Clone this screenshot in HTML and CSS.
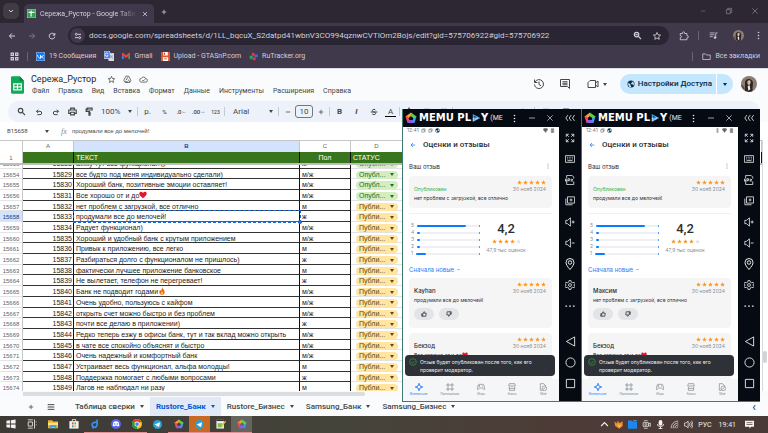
FILE: index.html
```html
<!DOCTYPE html>
<html lang="ru">
<head>
<meta charset="utf-8">
<title>Сережа_Рустор - Google Таблицы</title>
<link rel="stylesheet" href="styles.css">
</head>
<body>
<svg class="defs" aria-hidden="true">
  <symbol id="star" viewBox="0 0 24 24"><path fill="currentColor" d="M12 1l3.3 7.2 7.7.9-5.700 5.300 1.500 7.600L12 18.200 5.200 22l1.500-7.600L1 9.100l7.700-.9z"/></symbol>
  <symbol id="star-o" viewBox="0 0 24 24"><path d="M12 3.500l2.500 5.800 6.200.5-4.700 4.100 1.400 6.100L12 16.800 6.600 20l1.400-6.100L3.300 9.800l6.200-.5z"/></symbol>
  <symbol id="down" viewBox="0 0 24 24"><path d="M6 9l6 6 6-6"/></symbol>
  <symbol id="left" viewBox="0 0 24 24"><path d="M21 12H4m8-8l-8 8 8 8"/></symbol>
  <symbol id="right" viewBox="0 0 24 24"><path d="M3 12h17m-8-8l8 8-8 8"/></symbol>
  <symbol id="reload" viewBox="0 0 24 24"><path d="M20 9a8.500 8.500 0 1 0 .5 5M20.500 3v6.500H14"/></symbol>
  <symbol id="close" viewBox="0 0 24 24"><path d="M4 4l16 16M20 4L4 20"/></symbol>
  <symbol id="plus" viewBox="0 0 24 24"><path d="M12 3v18M3 12h18"/></symbol>
  <symbol id="minus" viewBox="0 0 24 24"><path d="M3 12h18"/></symbol>
  <symbol id="restore" viewBox="0 0 24 24"><path d="M4 8h12v12H4zM8 8V4h12v12h-4"/></symbol>
  <symbol id="kebab" viewBox="0 0 24 24"><g fill="currentColor" stroke="none"><circle cx="12" cy="4" r="2.200"/><circle cx="12" cy="12" r="2.200"/><circle cx="12" cy="20" r="2.200"/></g></symbol>
  <symbol id="tune" viewBox="0 0 24 24"><circle cx="7" cy="7" r="3"/><path d="M12 7h9M3 17h9"/><circle cx="17" cy="17" r="3"/></symbol>
  <symbol id="search" viewBox="0 0 24 24"><circle cx="9.500" cy="9.500" r="6"/><path d="M14 14l7.500 7.500"/></symbol>
  <symbol id="zoomout" viewBox="0 0 24 24"><circle cx="9.500" cy="9.500" r="6"/><path d="M14 14l7.500 7.500M6.500 9.500h6"/></symbol>
  <symbol id="puzzle" viewBox="0 0 24 24"><path d="M3 6h5.500V4.500a2.500 2.500 0 0 1 5 0V6H19v5.500h1a2.500 2.500 0 0 1 0 5h-1V21H3v-5c4 0 4-5 0-5z"/></symbol>
  <symbol id="playlist" viewBox="0 0 24 24"><path d="M2 5h13M2 10h13M2 15h8M18 17V5h5"/><circle cx="16" cy="17.500" r="2.500" fill="currentColor"/></symbol>
  <symbol id="apps" viewBox="0 0 24 24"><path d="M3 3h6v6H3zM15 3h6v6h-6zM3 15h6v6H3zM15 15h6v6h-6z"/></symbol>
  <symbol id="folder" viewBox="0 0 24 24"><path d="M2 5h7l2.500 3H22v12H2z"/></symbol>
  <symbol id="avatar" viewBox="0 0 24 24"><circle cx="12" cy="12" r="12" fill="#8b7d74"/><path fill="#2b2523" d="M6 22V9c1-6 11-6 12 1l-1 13-5 1z"/><path fill="#d9b8a5" d="M9.500 8.500c1-3 5-3 5 0s-1.500 5-2.800 5-2.200-2-2.200-5z"/><path fill="#f0ebe8" d="M10 15l3-1 1 6-3 2z"/><path fill="#5c504a" d="M0 13c3 0 5 3 6 8-3-1-6-4-6-8z"/></symbol>
  <symbol id="sheets" viewBox="0 0 24 32"><path fill="#0fa958" d="M2 0h14l8 8v22a2 2 0 0 1-2 2H2a2 2 0 0 1-2-2V2a2 2 0 0 1 2-2z"/><path fill="#087f3f" d="M16 0l8 8h-8z"/><path fill="none" stroke="#fff" stroke-width="2.200" d="M5 14h14v11H5zM5 19.500h14M12 14v11"/></symbol>
  <symbol id="person-add" viewBox="0 0 24 24"><path d="M8 3h7l6 11-3 6H6l-4-6zM8 14l5-8M14 12l4 7M5 18h8"/></symbol>
  <symbol id="cloud" viewBox="0 0 24 24"><path d="M7 19a5 5 0 0 1-.5-10 6 6 0 0 1 11.300 1A4.500 4.500 0 0 1 18 19zM9 13.500l2.500 2.500 4-4.500"/></symbol>
  <symbol id="history" viewBox="0 0 24 24"><path d="M4 8a9 9 0 1 1-1 5M3 3v6h6M12 7v6l4 2.500"/></symbol>
  <symbol id="comment" viewBox="0 0 24 24"><path d="M3 3h18v18l-4-4H3zM7 7.500h10M7 10.500h10M7 13.500h10"/></symbol>
  <symbol id="video" viewBox="0 0 24 24"><path d="M6 5h11v14H2V9zM17 10l5-4v12l-5-4"/></symbol>
  <symbol id="globe" viewBox="0 0 24 24"><circle cx="12" cy="12" r="10.500" fill="#0b2a44"/><path fill="#c2e7ff" d="M4 8l6 5v3l2 2v4C6 21 2 15 4 8zM12 3h4l1 3-3 2v2h-3l2 3h4l1 3 2 0c2-6 0-10-4-12z"/></symbol>
  <symbol id="undo" viewBox="0 0 24 24"><path d="M5 10h10a5 5 0 0 1 0 10H7M9.500 5L4.500 10l5 5"/></symbol>
  <symbol id="redo" viewBox="0 0 24 24"><path d="M19 10H9a5 5 0 0 0 0 10h8M14.500 5l5 5-5 5"/></symbol>
  <symbol id="print" viewBox="0 0 24 24"><path d="M7 8V3h10v5M6 17H2V8h20v9h-4M7 14h10v7H7z"/></symbol>
  <symbol id="paint" viewBox="0 0 24 24"><path d="M6 3h13v5H6zM6 5.500H3V12h9v3M10.500 15h3v7h-3z"/></symbol>
  <symbol id="strike" viewBox="0 0 24 24"><path d="M2 12h20M17 7c-1-4-10-4-10 1 0 2 2 3.500 5 4s5 2 5 4c0 5-9 5-10.500 1"/></symbol>
  <symbol id="fill" viewBox="0 0 24 24"><path d="M9 2l10 10-7 7-8-8 7-7M20 15l2 4"/></symbol>
  <symbol id="box" viewBox="0 0 24 24"><path d="M3 4h18v16H3zM12 4v16M3 12h18"/></symbol>
  <symbol id="lines" viewBox="0 0 24 24"><path d="M2 5h20M2 12h20M2 19h20"/></symbol>
  <symbol id="memu" viewBox="0 0 24 24"><path fill="#ff9d2e" d="M12 1L1 9l5 4 6-5z"/><path fill="#f04b58" d="M1 9l4 13 4-5-3-8z"/><path fill="#8b5cf0" d="M5 22h14l-3-6H8z"/><path fill="#3a9df5" d="M19 22l4-13-6 1-2 8z"/><path fill="#5ad04a" d="M12 1l11 8-5 4-7-5z"/></symbol>
  <symbol id="play" viewBox="0 0 24 24"><path fill="#111c26" stroke="#35a7ef" stroke-width="3.500" d="M4 3l17 9-17 9z"/><path fill="#2a7fd0" d="M4 12h14L4 20z"/></symbol>
  <symbol id="chev3" viewBox="0 0 24 24"><path d="M7 5l-5 7 5 7M15 5l-5 7 5 7M23 5l-5 7 5 7"/></symbol>
  <symbol id="full" viewBox="0 0 24 24"><path d="M3 9V3h6M3 3l6 6M15 3h6v6M21 3l-6 6M3 15v6h6M3 21l6-6M21 15v6h-6M21 21l-6-6"/></symbol>
  <symbol id="keyb" viewBox="0 0 24 24"><path d="M1 4h22v16H1zM5 8h2M9 8h2M13 8h2M17 8h2M5 12h2M9 12h2M13 12h2M17 12h2M6 16h12"/></symbol>
  <symbol id="apk" viewBox="0 0 24 24"><path d="M4 8V1h13l4 4v3M4 16v7h17v-7M0 16l2-7 2 7M1 14h3M7 16V9h4v4H7M15 9v7M20 9l-4 3.500 4 3.500"/></symbol>
  <symbol id="copy" viewBox="0 0 24 24"><path d="M6 2h17v15H6zM2 6v15h16M14.500 6v7M11 9.500h7"/></symbol>
  <symbol id="volup" viewBox="0 0 24 24"><path d="M2 8h4l7-6v20l-7-6H2zM16 12h7M19.500 8.500v7"/></symbol>
  <symbol id="voldn" viewBox="0 0 24 24"><path d="M2 8h4l7-6v20l-7-6H2zM16 12h7"/></symbol>
  <symbol id="pin" viewBox="0 0 24 24"><path d="M12 23C7 17 4 13 4 9a8 8 0 0 1 16 0c0 4-3 8-8 14z"/><circle cx="12" cy="9" r="3.500"/></symbol>
  <symbol id="gear" viewBox="0 0 24 24"><path d="M10 1h4l1 4 3 1.500 4-1 2 3.500-3 3 3 3-2 3.500-4-1-3 1.500-1 4h-4l-1-4-3-1.500-4 1L0 15l3-3-3-3 2-3.500 4 1L9 5z"/><circle cx="12" cy="12" r="3.500"/></symbol>
  <symbol id="dots" viewBox="0 0 24 24"><path d="M1 12h4M10 12h4M19 12h4"/></symbol>
  <symbol id="tri" viewBox="0 0 24 24"><path d="M21 2v20L3 12z"/></symbol>
  <symbol id="circle" viewBox="0 0 24 24"><circle cx="12" cy="12" r="10"/></symbol>
  <symbol id="square" viewBox="0 0 24 24"><path d="M3 3h18v18H3z"/></symbol>
  <symbol id="thumb" viewBox="0 0 24 24"><path d="M3 11h4v10H3zM7 12l5-9c3 0 3 2 2 6h7l-2 12H7"/></symbol>
  <symbol id="check" viewBox="0 0 24 24"><circle cx="12" cy="12" r="10"/><path d="M7 12l4 4 6-7"/></symbol>
  <symbol id="spark" viewBox="0 0 24 24"><path d="M12 1c1 7 4 10 11 11-7 1-10 4-11 11-1-7-4-10-11-11 7-1 10-4 11-11z"/></symbol>
  <symbol id="pad" viewBox="0 0 24 24"><path d="M6 4h12c4 0 5 16 4 16-3 0-4-5-6-5H8c-2 0-3 5-6 5-1 0 0-16 4-16zM7 7v4M5 9h4M15 9h3"/></symbol>
  <symbol id="shop" viewBox="0 0 24 24"><path d="M4 2h16l2 7H2zM4 12v10h16V12M4 16h16"/></symbol>
  <symbol id="mine" viewBox="0 0 24 24"><path d="M20 9L14 2H4v20h6"/><circle cx="16" cy="16" r="7"/><path d="M12 19l8-6"/></symbol>
  <symbol id="heart" viewBox="0 0 24 24"><path fill="#e0182d" d="M12 22C4 16 0 11 1 7c1-6 8-6 11-1 3-5 10-5 11 1 1 4-3 9-11 15z"/></symbol>
  <symbol id="fire" viewBox="0 0 24 24"><path fill="#ec6a1f" d="M12 0c1 5 8 8 8 15 0 5-3 9-8 9s-8-4-8-9c0-3 1-6 3-7l1 4c3-3 4-7 4-12z"/><path fill="#ffd24a" d="M12 13c3 3 4 5 3 8-2 3-6 2-7-1 0-3 3-3 4-7z"/></symbol>
  <symbol id="telegram" viewBox="0 0 24 24"><circle cx="12" cy="12" r="12" fill="#2a9fd8"/><path fill="#fff" d="M4 12l15-6-3 13-4-3-2 2-1-4z"/></symbol>
</svg>

<div class="browser">
  <header class="tabstrip">
    <button class="tabsearch" aria-label="Поиск вкладок"><svg class="ic8 bold"><use href="#down"/></svg></button>
    <div class="tab">
      <svg class="ic9" viewBox="0 0 24 24"><path fill="#2ba24c" d="M0 0h24v24H0z"/><path fill="none" stroke="#fff" stroke-width="3" d="M4 9h16M11 4v16"/></svg>
      <span class="tab-title">Сережа_Рустор - Google Табл</span>
      <button aria-label="Закрыть вкладку"><svg class="ic6 bold"><use href="#close"/></svg></button>
    </div>
    <button class="newtab" aria-label="Новая вкладка"><svg class="ic6 bold"><use href="#plus"/></svg></button>
    <div class="wincontrols">
      <button aria-label="Свернуть"><svg class="ic6"><use href="#minus"/></svg></button>
      <button aria-label="Восстановить"><svg class="ic8"><use href="#restore"/></svg></button>
      <button aria-label="Закрыть"><svg class="ic8"><use href="#close"/></svg></button>
    </div>
  </header>
  <nav class="addressrow">
    <button aria-label="Назад"><svg class="ic8 bold"><use href="#left"/></svg></button>
    <button class="dim" aria-label="Вперёд"><svg class="ic8 bold"><use href="#right"/></svg></button>
    <button aria-label="Обновить"><svg class="ic8 bold"><use href="#reload"/></svg></button>
    <div class="omnibox">
      <button class="siteinfo" aria-label="Сведения о сайте"><svg class="ic8 bold"><use href="#tune"/></svg></button>
      <input aria-label="Адрес" value="docs.google.com/spreadsheets/d/1LL_bqcuX_S2datpd41wbnV3CO994qznwCVTIOm2Bojs/edit?gid=575706922#gid=575706922">
      <button aria-label="Масштаб"><svg class="ic9 bold"><use href="#zoomout"/></svg></button>
      <button aria-label="В закладки"><svg class="ic10"><use href="#star-o"/></svg></button>
    </div>
    <button class="ext" aria-label="Расширения"><svg class="ic10"><use href="#puzzle"/></svg></button>
    <i class="vsep"></i>
    <button class="ext" aria-label="Музыка"><svg class="ic9"><use href="#playlist"/></svg></button>
    <button aria-label="Профиль"><svg class="ic11"><use href="#avatar"/></svg></button>
    <button aria-label="Меню"><svg class="ic9"><use href="#kebab"/></svg></button>
  </nav>
  <nav class="bookmarks">
    <button aria-label="Приложения"><svg class="ic9 bold"><use href="#apps"/></svg></button>
    <i class="vsep"></i>
    <a href="#vk"><svg class="ic9" viewBox="0 0 24 24"><rect width="24" height="24" rx="5" fill="#0a7cff"/><path fill="none" stroke="#fff" stroke-width="2.500" d="M4 8c1 6 4 9 8 9V8M20 8c-2 4-4 5-8 5 4 0 6 1 8 4"/></svg>19 Сообщения</a>
    <a href="#translate" aria-label="Переводчик"><svg class="ic10" viewBox="0 0 24 24"><path fill="#dfe3ea" d="M10 6h14v18H12z"/><path fill="#4a86e8" d="M0 0h13l4 18H0z"/><path fill="none" stroke="#fff" stroke-width="2" d="M10 7a4 4 0 1 0 0 4H7"/><path fill="none" stroke="#6d7f99" stroke-width="1.500" d="M15 12h7M18 12c0 4 2 6 4 7"/></svg></a>
    <a href="#gmail"><svg class="ic8" viewBox="0 0 24 24"><path fill="#4285f4" stroke="none" d="M0 4h5v17H0z"/><path fill="#34a853" stroke="none" d="M19 4h5v17h-5z"/><path fill="#ea4335" stroke="none" d="M0 4l4-1 8 7 8-7 4 1v5l-12 9L0 9z"/></svg>Gmail</a>
    <a href="#upload"><svg class="ic9" viewBox="0 0 24 24"><path fill="#e2572b" stroke="none" d="M0 0h24v24H0z"/><path fill="#fff" stroke="none" d="M6 0h12v9H6zM5 14h14v10H5z"/><path fill="#c23c1d" stroke="none" d="M8 2h3v5H8zM8 17h8v2H8z"/></svg>Upload - GTASnP.com</a>
    <a href="#rutracker"><svg class="ic9" viewBox="0 0 24 24"><g stroke="none"><path fill="#d8394a" d="M8 1l8 2-2 9-7-3z"/><path fill="#3f6fd8" d="M14 8l9-2 0 8-8 0z"/><path fill="#23a559" d="M1 10l9 0 0 8-7 2z"/><path fill="#d8394a" d="M10 14l9 1-3 8-7-3z"/></g></svg>RuTracker.org</a>
    <div class="allbm"><i class="vsep"></i><a href="#all"><svg class="ic9"><use href="#folder"/></svg>Все закладки</a></div>
  </nav>
</div>

<main class="docs">
  <header class="dochead">
    <svg class="logo"><use href="#sheets"/></svg>
    <div class="docinfo">
      <div class="titleline"><h1>Сережа_Рустор</h1><svg class="ic9"><use href="#star-o"/></svg><svg class="ic9"><use href="#person-add"/></svg><svg class="ic9"><use href="#cloud"/></svg></div>
      <nav class="menu"><a href="#f">Файл</a><a href="#e">Правка</a><a href="#v">Вид</a><a href="#i">Вставка</a><a href="#fm">Формат</a><a href="#d">Данные</a><a href="#t">Инструменты</a><a href="#x">Расширения</a><a href="#h">Справка</a></nav>
    </div>
    <div class="docactions">
      <button aria-label="История"><svg class="ic12"><use href="#history"/></svg></button>
      <button aria-label="Комментарии"><svg class="ic12"><use href="#comment"/></svg></button>
      <button class="meet" aria-label="Видеовстреча"><svg class="ic12"><use href="#video"/></svg><i class="caret"></i></button>
      <div class="share"><button class="share-main"><svg class="ic8"><use href="#globe"/></svg>Настройки Доступа</button><button class="share-more" aria-label="Ещё"><i class="caret"></i></button></div>
      <svg class="ic16"><use href="#avatar"/></svg>
    </div>
  </header>

  <div class="toolbar">
    <button aria-label="Поиск"><svg class="ic9 bold"><use href="#search"/></svg></button>
    <button aria-label="Отменить"><svg class="ic8 bold"><use href="#undo"/></svg></button>
    <button aria-label="Повторить"><svg class="ic8 bold"><use href="#redo"/></svg></button>
    <button aria-label="Печать"><svg class="ic9 bold"><use href="#print"/></svg></button>
    <button aria-label="Копировать формат"><svg class="ic9 bold"><use href="#paint"/></svg></button>
    <span class="drop zoomsel"><select aria-label="Масштаб"><option>100%</option></select></span>
    <i class="vsep"></i>
    <button>р.</button><button class="small">%</button><button class="small">.0<sub>←</sub></button><button class="small">.00<sub>→</sub></button><button class="small num">123</button>
    <i class="vsep"></i>
    <span class="drop fontsel"><select aria-label="Шрифт"><option>Arial</option></select></span>
    <i class="vsep"></i>
    <div class="sizer"><button aria-label="Уменьшить"><svg class="ic6 bold"><use href="#minus"/></svg></button><input aria-label="Размер" value="10"><button aria-label="Увеличить"><svg class="ic6 bold"><use href="#plus"/></svg></button></div>
    <i class="vsep"></i>
    <button><b>B</b></button><button><b><em>I</em></b></button><button aria-label="Зачёркнутый"><svg class="ic8 bold"><use href="#strike"/></svg></button><button class="fontcolor">A</button>
    <i class="vsep"></i>
    <button aria-label="Заливка"><svg class="ic9 bold"><use href="#fill"/></svg></button>
    <button aria-label="Границы"><svg class="ic8 bold"><use href="#box"/></svg></button>
    <button aria-label="Объединить"><svg class="ic8 bold"><use href="#box"/></svg></button>
    <i class="vsep"></i>
    <button class="wide" aria-label="По горизонтали"><svg class="ic8 bold"><use href="#lines"/></svg></button>
    <button class="wide" aria-label="По вертикали"><svg class="ic8 bold"><use href="#plus"/></svg></button>
    <button class="wide" aria-label="Перенос"><svg class="ic8 bold"><use href="#redo"/></svg></button>
    <button class="wide" aria-label="Поворот"><svg class="ic8 bold"><use href="#fill"/></svg></button>
    <i class="vsep"></i>
    <button class="wide" aria-label="Ссылка"><svg class="ic8 bold"><use href="#box"/></svg></button>
    <button class="wide" aria-label="Комментарий"><svg class="ic8 bold"><use href="#comment"/></svg></button>
  </div>

  <div class="formula">
    <span class="drop namebox"><input aria-label="Ячейка" value="B15658"></span>
    <span class="fx">fx</span>
    <input class="fxinput" aria-label="Формула" value="продумали все до мелочей!">
  </div>

  <div class="sheet">
    <div class="gridwrap">
    <table>
      <thead>
        <tr class="cols"><th></th><th>A</th><th class="sel">B</th><th>C</th><th>D</th><th></th></tr>
        <tr class="frozen"><th scope="row">1</th><td></td><td>ТЕКСТ</td><td class="mid">Пол</td><td>СТАТУС</td><td class="rest"></td></tr>
      </thead>
      <tbody>
        <tr><th scope="row">15653</th><td>15828</td><td>Вижу тут все функционал<svg class="emo"><use href="#fire"/></svg></td><td>м</td><td><span class="chip ok"><select aria-label="Статус"><option>Опубл...</option></select></span></td></tr>
        <tr><th scope="row">15654</th><td>15829</td><td>все будто под меня индивидуально сделали)</td><td>м/ж</td><td><span class="chip ok"><select aria-label="Статус"><option>Опубл...</option></select></span></td></tr>
        <tr><th scope="row">15655</th><td>15830</td><td>Хороший банк, позитивные эмоции оставляет!</td><td>м/ж</td><td><span class="chip ok"><select aria-label="Статус"><option>Опубл...</option></select></span></td></tr>
        <tr><th scope="row">15656</th><td>15831</td><td>Все хорошо от и до<svg class="emo"><use href="#heart"/></svg></td><td>м/ж</td><td><span class="chip ok"><select aria-label="Статус"><option>Опубл...</option></select></span></td></tr>
        <tr><th scope="row">15657</th><td>15832</td><td>нет проблем с загрузкой, все отлично</td><td>м</td><td><span class="chip"><select aria-label="Статус"><option>Публи...</option></select></span></td></tr>
        <tr class="active"><th scope="row">15658</th><td>15833</td><td>продумали все до мелочей!</td><td>ж</td><td><span class="chip"><select aria-label="Статус"><option>Публи...</option></select></span></td></tr>
        <tr><th scope="row">15659</th><td>15834</td><td>Радует функционал)</td><td>м/ж</td><td><span class="chip"><select aria-label="Статус"><option>Публи...</option></select></span></td></tr>
        <tr><th scope="row">15660</th><td>15835</td><td>Хороший и удобный банк с крутым приложением</td><td>м/ж</td><td><span class="chip"><select aria-label="Статус"><option>Публи...</option></select></span></td></tr>
        <tr><th scope="row">15661</th><td>15836</td><td>Привык к приложению, все легко</td><td>м</td><td><span class="chip"><select aria-label="Статус"><option>Публи...</option></select></span></td></tr>
        <tr><th scope="row">15662</th><td>15837</td><td>Разбираться долго с функционалом не пришлось)</td><td>ж</td><td><span class="chip"><select aria-label="Статус"><option>Публи...</option></select></span></td></tr>
        <tr><th scope="row">15663</th><td>15838</td><td>фактически лучшее приложение банковское</td><td>м</td><td><span class="chip"><select aria-label="Статус"><option>Публи...</option></select></span></td></tr>
        <tr><th scope="row">15664</th><td>15839</td><td>Не вылетает, телефон не перегревает!</td><td>ж</td><td><span class="chip"><select aria-label="Статус"><option>Публи...</option></select></span></td></tr>
        <tr><th scope="row">15665</th><td>15840</td><td>Банк не подводит годами<svg class="emo"><use href="#fire"/></svg></td><td>м/ж</td><td><span class="chip"><select aria-label="Статус"><option>Публи...</option></select></span></td></tr>
        <tr><th scope="row">15666</th><td>15841</td><td>Очень удобно, пользуюсь с кайфом</td><td>м/ж</td><td><span class="chip"><select aria-label="Статус"><option>Публи...</option></select></span></td></tr>
        <tr><th scope="row">15667</th><td>15842</td><td>открыть счет можно быстро и без проблем</td><td>м/ж</td><td><span class="chip"><select aria-label="Статус"><option>Публи...</option></select></span></td></tr>
        <tr><th scope="row">15668</th><td>15843</td><td>почти все делаю в приложении)</td><td>ж</td><td><span class="chip"><select aria-label="Статус"><option>Публи...</option></select></span></td></tr>
        <tr><th scope="row">15669</th><td>15844</td><td>Редко теперь езжу в офисы банк, тут и так вклад можно открыть</td><td>м/ж</td><td><span class="chip"><select aria-label="Статус"><option>Публи...</option></select></span></td></tr>
        <tr><th scope="row">15670</th><td>15845</td><td>в чате все спокойно объяснят и быстро</td><td>м/ж</td><td><span class="chip"><select aria-label="Статус"><option>Публи...</option></select></span></td></tr>
        <tr><th scope="row">15671</th><td>15846</td><td>Очень надежный и комфортный банк</td><td>м/ж</td><td><span class="chip"><select aria-label="Статус"><option>Публи...</option></select></span></td></tr>
        <tr><th scope="row">15672</th><td>15847</td><td>Устраивает весь функционал, альфа молодцы!</td><td>м</td><td><span class="chip"><select aria-label="Статус"><option>Публи...</option></select></span></td></tr>
        <tr><th scope="row">15673</th><td>15848</td><td>Поддержка помогает с любыми вопросами</td><td>ж</td><td><span class="chip"><select aria-label="Статус"><option>Публи...</option></select></span></td></tr>
        <tr><th scope="row">15674</th><td>15849</td><td>Лагов не наблюдал ни разу</td><td>м</td><td><span class="chip"><select aria-label="Статус"><option>Публи...</option></select></span></td></tr>
      </tbody>
    </table>
    </div>
    <div class="vscroll"><i></i></div>
    <div class="hscroll"><i></i></div>
  </div>

  <footer class="sheettabs">
    <button class="tool" aria-label="Добавить лист"><svg class="ic6 bold"><use href="#plus"/></svg></button>
    <button class="tool" aria-label="Все листы"><svg class="ic8 bold"><use href="#lines"/></svg></button>
    <button class="st first">Таблица сверки<i class="caret"></i></button>
    <button class="st on">Rustore_Банк<i class="caret"></i></button>
    <button class="st">Rustore_Бизнес<i class="caret"></i></button>
    <button class="st">Samsung_Банк<i class="caret"></i></button>
    <button class="st">Samsung_Бизнес<i class="caret"></i></button>
    <button class="tool collapse" aria-label="Скрыть панель">‹</button>
  </footer>
</main>

<footer class="taskbar">
  <button aria-label="Пуск"><svg class="ic10" viewBox="0 0 24 24"><path fill="#f2f2f2" stroke="none" d="M1 4l9-1v8H1zM12 3l11-2v10H12zM1 13h9v8l-9-1zM12 13h11v10l-11-2z"/></svg></button>
  <button aria-label="Представление задач"><svg class="ic10" viewBox="0 0 24 24"><path d="M2 2h12M2 22h12M3 7h10v10H3zM18 1v22M21 7h2M21 14h2"/></svg></button>
  <button aria-label="Проводник"><svg class="ic10" viewBox="0 0 24 24"><g stroke="none"><path fill="#f0b429" d="M0 3h10l2 3h12v16H0z"/><path fill="#ffe08a" d="M0 9h24v6H0z"/><path fill="#3b9be8" d="M4 15h16v8h-4v-4H8v4H4z"/></g></svg></button>
  <button aria-label="Магазин"><svg class="ic10" viewBox="0 0 24 24"><path fill="#f4f4f4" stroke="none" d="M1 5h22v18H1z"/><path fill="none" stroke="#f4f4f4" stroke-width="2" d="M8 5V1h8v4"/><g stroke="none"><path fill="#e8532b" d="M7 8h4v5H7z"/><path fill="#6bb52f" d="M13 8h4v5h-4z"/><path fill="#2c9ce8" d="M7 15h4v5H7z"/><path fill="#f5b41c" d="M13 15h4v5h-4z"/></g></svg></button>
  <button class="run" aria-label="Редактор"><svg class="ic10" viewBox="0 0 24 24"><path fill="none" stroke="#3d8ff0" stroke-width="4" d="M17 1v13a6 6 0 1 1-5-6h5M7 16v7"/></svg></button>
  <button class="run" aria-label="Discord"><svg class="ic10" viewBox="0 0 24 24"><g stroke="none"><circle cx="12" cy="12" r="12" fill="#5865f2"/><path fill="#fff" d="M6 7c4-2 8-2 12 0l2 9-4 2-1-2H9l-1 2-4-2z"/><circle cx="9" cy="12" r="1.700" fill="#5865f2"/><circle cx="15" cy="12" r="1.700" fill="#5865f2"/></g></svg></button>
  <button class="run" aria-label="Chrome"><svg class="ic10" viewBox="0 0 24 24"><g stroke="none"><circle cx="12" cy="12" r="12" fill="#fbc116"/><path fill="#e33b2e" d="M12 12L1.600 6a12 12 0 0 1 20.800 0z"/><path fill="#229a48" d="M12 12l0 12A12 12 0 0 1 1.600 6z"/><circle cx="12" cy="12" r="6" fill="#fff"/><circle cx="12" cy="12" r="4.500" fill="#4285f4"/></g></svg></button>
  <button aria-label="Telegram"><svg class="ic9"><use href="#telegram"/></svg></button>
  <button class="run" aria-label="MEmu"><svg class="ic10"><use href="#memu"/></svg></button>
  <button class="run alert" aria-label="Telegram"><svg class="ic9"><use href="#telegram"/></svg></button>
  <button class="run" aria-label="Notepad++"><svg class="ic10" viewBox="0 0 24 24"><g stroke="none"><path fill="#f1f1ea" d="M1 2h18v21H1z"/><path fill="#333" d="M1 2h18v3H1z"/><path fill="#7bc043" d="M4 10h11v10H4z"/><path fill="#e8b93c" d="M22 4l2 3-9 10-3 1 1-4z"/></g></svg></button>
  <button class="run open" aria-label="MEmu"><svg class="ic10"><use href="#memu"/></svg></button>
  <div class="tray">
    <svg class="ic9 bold" viewBox="0 0 24 24"><path d="M3 16l9-9 9 9"/></svg>
    <svg class="ic9" viewBox="0 0 24 24"><g stroke="none"><path fill="#f28c28" d="M1 4l8 5V1l6 7 8-5v13l-9 7L3 16z"/><path fill="#ffd08a" d="M9 9l6 6 6-5-7 10z"/></g></svg>
    <svg class="ic9" viewBox="0 0 24 24"><g stroke="none"><path fill="#1a86f0" d="M0 1h10l2 3h12v19H0z"/><path fill="#5db4ff" d="M14 1h9v2h-9z"/></g></svg>
    <svg class="ic9" viewBox="0 0 24 24"><path d="M5 2h10M3 7h14v10H3zM17 11l5-3v9l-5-3M5 22h10"/><circle cx="10" cy="12" r="2.500"/></svg>
    <svg class="ic9" viewBox="0 0 24 24"><rect x="7" y="0" width="10" height="15" rx="5" fill="#f4f4f4" stroke="none"/><path fill="none" stroke="#f4f4f4" stroke-width="2.500" d="M4 11c0 9 16 9 16 0M12 18v5M7 23h10"/></svg>
    <svg class="ic9" viewBox="0 0 24 24"><path d="M3 22C3 11 11 3 22 3M8 22c0-8 6-14 14-14M13 22c0-5 4-9 9-9M18 22c0-2 2-4 4-4"/></svg>
    <svg class="ic9" viewBox="0 0 24 24"><path d="M1 8h4l6-5v18l-6-5H1zM14 8c2 2 2 6 0 8M17 5c4 4 4 10 0 14M20 2c5 6 5 14 0 20"/></svg>
    <span class="lang">РУС</span><time>19:41</time>
    <svg class="ic9" viewBox="0 0 24 24"><path fill="#f4f4f4" stroke="none" d="M0 2h24v16h-8l-4 5v-5H0z"/><path stroke="#55433e" stroke-width="2" d="M4 7h16M4 12h16"/></svg>
  </div>
</footer>

<section class="emu one" aria-label="MEmu 1">
  <header class="emubar"><svg class="ic12"><use href="#memu"/></svg><strong>MEMU PL<svg class="ic8"><use href="#play"/></svg>Y</strong><span class="inst">(ME</span>
    <button aria-label="Меню"><svg class="ic9"><use href="#kebab"/></svg></button><button aria-label="Свернуть"><svg class="ic8"><use href="#minus"/></svg></button><button aria-label="Закрыть"><svg class="ic8"><use href="#close"/></svg></button><button class="fold" aria-label="Боковая панель"><svg class="ic10"><use href="#chev3"/></svg></button></header>
  <div class="screen">
    <div class="status"><time>12:41</time><svg class="ic5 bold"><use href="#restore"/></svg><svg class="ic5 bold"><use href="#restore"/></svg><svg class="ic5 bold"><use href="#globe"/></svg><span class="sys"><svg class="ic5" viewBox="0 0 24 24"><path fill="#666" d="M0 6c7-6 17-6 24 0L12 22z"/></svg><svg class="ic5" viewBox="0 0 24 24"><path fill="#888" d="M6 3h12v20H6z"/></svg></span></div>
    <h2><svg class="ic6 bold"><use href="#left"/></svg>Оценки и отзывы</h2>
    <div class="own"><span>Ваш отзыв</span><svg class="ic6"><use href="#kebab"/></svg></div>
    <article class="card mine">
      <div class="stars"><svg><use href="#star"/></svg><svg><use href="#star"/></svg><svg><use href="#star"/></svg><svg><use href="#star"/></svg><svg><use href="#star"/></svg></div>
      <div class="who"><span class="pub">Опубликован</span><time>30 нояб 2024</time></div>
      <p>нет проблем с загрузкой, все отлично</p>
    </article>
    <div class="rating">
      <ol><li>5<span class="bar"><i style="width:79%"></i></span></li><li>4<span class="bar"><i style="width:5%"></i></span></li><li>3<span class="bar"><i style="width:5%"></i></span></li><li>2<span class="bar"><i style="width:5%"></i></span></li><li>1<span class="bar"><i style="width:16%"></i></span></li></ol>
      <div class="score"><b>4,2</b><div class="stars"><svg><use href="#star"/></svg><svg><use href="#star"/></svg><svg><use href="#star"/></svg><svg><use href="#star"/></svg><svg class="off"><use href="#star"/></svg></div><small>47,9 тыс оценок</small></div>
    </div>
    <button class="sort">Сначала новые<svg class="ic5 bold"><use href="#down"/></svg></button>
    <article class="card">
      <div class="stars"><svg><use href="#star"/></svg><svg><use href="#star"/></svg><svg><use href="#star"/></svg><svg><use href="#star"/></svg><svg><use href="#star"/></svg></div>
      <div class="who"><b>Kayhan</b><time>30 нояб 2024</time></div>
      <p>продумали все до мелочей!</p>
      <div class="votes"><button aria-label="Полезно"><svg class="ic6 bold"><use href="#thumb"/></svg></button><button aria-label="Бесполезно"><svg class="ic6 bold flip"><use href="#thumb"/></svg></button></div>
    </article>
    <article class="card cut">
      <div class="stars"><svg><use href="#star"/></svg><svg><use href="#star"/></svg><svg><use href="#star"/></svg><svg><use href="#star"/></svg><svg><use href="#star"/></svg></div>
      <div class="who"><b>Бекзод</b><time>30 нояб 2024</time></div>
      <p>Все хорошо от и до<svg class="ic6"><use href="#heart"/></svg></p>
    </article>
    <div class="toast"><svg class="ic8"><use href="#check"/></svg><p>Отзыв будет опубликован после того, как его проверит модератор.</p></div>
    <nav class="appnav"><a class="on" href="#a"><svg class="ic8 bold"><use href="#spark"/></svg>Интересное</a><a href="#b"><svg class="ic8"><use href="#apps"/></svg>Приложения</a><a href="#c"><svg class="ic8"><use href="#pad"/></svg>Игры</a><a href="#d"><svg class="ic8"><use href="#shop"/></svg>Киоск</a><a href="#e"><svg class="ic8"><use href="#mine"/></svg>Моё</a></nav>
  </div>
  <aside class="side">
    <button aria-label="Во весь экран"><svg class="ic10"><use href="#full"/></svg></button><button aria-label="Клавиатура"><svg class="ic10"><use href="#keyb"/></svg></button><button aria-label="APK"><svg class="ic10"><use href="#apk"/></svg></button><button aria-label="Мульти"><svg class="ic10"><use href="#copy"/></svg></button><button aria-label="Громче"><svg class="ic10"><use href="#volup"/></svg></button><button aria-label="Тише"><svg class="ic10"><use href="#voldn"/></svg></button><button aria-label="GPS"><svg class="ic12"><use href="#pin"/></svg></button><button aria-label="Настройки"><svg class="ic10"><use href="#gear"/></svg></button><button aria-label="Ещё"><svg class="ic10 bold"><use href="#dots"/></svg></button>
    <button class="navkey" aria-label="Назад"><svg class="ic11"><use href="#tri"/></svg></button><button aria-label="Домой"><svg class="ic11"><use href="#circle"/></svg></button><button aria-label="Обзор"><svg class="ic11"><use href="#square"/></svg></button>
  </aside>
</section>

<section class="emu two" aria-label="MEmu 2">
  <header class="emubar"><svg class="ic12"><use href="#memu"/></svg><strong>MEMU PL<svg class="ic8"><use href="#play"/></svg>Y</strong><span class="inst">(ME</span>
    <button aria-label="Меню"><svg class="ic9"><use href="#kebab"/></svg></button><button aria-label="Свернуть"><svg class="ic8"><use href="#minus"/></svg></button><button aria-label="Закрыть"><svg class="ic8"><use href="#close"/></svg></button><button class="fold" aria-label="Боковая панель"><svg class="ic10"><use href="#chev3"/></svg></button></header>
  <div class="screen">
    <div class="status"><time>12:41</time><svg class="ic5 bold"><use href="#restore"/></svg><svg class="ic5 bold"><use href="#globe"/></svg><span class="sys"><svg class="ic5" viewBox="0 0 24 24"><path fill="#bbb" d="M9 2h6v20H9z"/></svg><svg class="ic5" viewBox="0 0 24 24"><path fill="#666" d="M0 6c7-6 17-6 24 0L12 22z"/></svg><svg class="ic5" viewBox="0 0 24 24"><path fill="#888" d="M6 3h12v20H6z"/></svg></span></div>
    <h2><svg class="ic6 bold"><use href="#left"/></svg>Оценки и отзывы</h2>
    <div class="own"><span>Ваш отзыв</span><svg class="ic6"><use href="#kebab"/></svg></div>
    <article class="card mine">
      <div class="stars"><svg><use href="#star"/></svg><svg><use href="#star"/></svg><svg><use href="#star"/></svg><svg><use href="#star"/></svg><svg><use href="#star"/></svg></div>
      <div class="who"><span class="pub">Опубликован</span><time>30 нояб 2024</time></div>
      <p>продумали все до мелочей!</p>
    </article>
    <div class="rating">
      <ol><li>5<span class="bar"><i style="width:79%"></i></span></li><li>4<span class="bar"><i style="width:5%"></i></span></li><li>3<span class="bar"><i style="width:5%"></i></span></li><li>2<span class="bar"><i style="width:5%"></i></span></li><li>1<span class="bar"><i style="width:16%"></i></span></li></ol>
      <div class="score"><b>4,2</b><div class="stars"><svg><use href="#star"/></svg><svg><use href="#star"/></svg><svg><use href="#star"/></svg><svg><use href="#star"/></svg><svg class="off"><use href="#star"/></svg></div><small>47,9 тыс оценок</small></div>
    </div>
    <button class="sort">Сначала новые<svg class="ic5 bold"><use href="#down"/></svg></button>
    <article class="card">
      <div class="stars"><svg><use href="#star"/></svg><svg><use href="#star"/></svg><svg><use href="#star"/></svg><svg><use href="#star"/></svg><svg><use href="#star"/></svg></div>
      <div class="who"><b>Максим</b><time>30 нояб 2024</time></div>
      <p>нет проблем с загрузкой, все отлично</p>
      <div class="votes"><button aria-label="Полезно"><svg class="ic6 bold"><use href="#thumb"/></svg></button><button aria-label="Бесполезно"><svg class="ic6 bold flip"><use href="#thumb"/></svg></button></div>
    </article>
    <article class="card cut">
      <div class="stars"><svg><use href="#star"/></svg><svg><use href="#star"/></svg><svg><use href="#star"/></svg><svg><use href="#star"/></svg><svg><use href="#star"/></svg></div>
      <div class="who"><b>Бекзод</b><time>30 нояб 2024</time></div>
      <p>Все хорошо от и до<svg class="ic6"><use href="#heart"/></svg></p>
    </article>
    <div class="toast"><svg class="ic8"><use href="#check"/></svg><p>Отзыв будет опубликован после того, как его проверит модератор.</p></div>
    <nav class="appnav"><a class="on" href="#a"><svg class="ic8 bold"><use href="#spark"/></svg>Интересное</a><a href="#b"><svg class="ic8"><use href="#apps"/></svg>Приложения</a><a href="#c"><svg class="ic8"><use href="#pad"/></svg>Игры</a><a href="#d"><svg class="ic8"><use href="#shop"/></svg>Киоск</a><a href="#e"><svg class="ic8"><use href="#mine"/></svg>Моё</a></nav>
  </div>
  <aside class="side">
    <button aria-label="Во весь экран"><svg class="ic10"><use href="#full"/></svg></button><button aria-label="Клавиатура"><svg class="ic10"><use href="#keyb"/></svg></button><button aria-label="APK"><svg class="ic10"><use href="#apk"/></svg></button><button aria-label="Мульти"><svg class="ic10"><use href="#copy"/></svg></button><button aria-label="Громче"><svg class="ic10"><use href="#volup"/></svg></button><button aria-label="Тише"><svg class="ic10"><use href="#voldn"/></svg></button><button aria-label="GPS"><svg class="ic12"><use href="#pin"/></svg></button><button aria-label="Настройки"><svg class="ic10"><use href="#gear"/></svg></button><button aria-label="Ещё"><svg class="ic10 bold"><use href="#dots"/></svg></button>
    <button class="navkey" aria-label="Назад"><svg class="ic11"><use href="#tri"/></svg></button><button aria-label="Домой"><svg class="ic11"><use href="#circle"/></svg></button><button aria-label="Обзор"><svg class="ic11"><use href="#square"/></svg></button>
  </aside>
</section>
</body>
</html>
```

FILE: styles.css
```css
* { box-sizing: border-box; margin: 0; padding: 0; }
body {
  position: relative;
  display: flex;
  flex-direction: column;
  height: 100vh;
  overflow: hidden;
  font: 8px/10px Roboto, "Liberation Sans", sans-serif;
  color: #444746;
  background: #f9fbfd;
}
button, input, select { font: inherit; color: inherit; background: none; border: 0; outline: 0; appearance: none; min-width: 0; }
button { display: flex; align-items: center; justify-content: center; flex: none; }
a { color: inherit; text-decoration: none; }
svg { display: block; flex: none; fill: none; stroke: currentColor; stroke-width: 2; }
#star, #memu, #avatar, #sheets, #globe, #heart, #fire, #telegram { stroke: none; }
.defs { position: absolute; width: 0; height: 0; }
.bold { stroke-width: 3; }
.ic5 { width: 5px; height: 5px; }
.ic6 { width: 6px; height: 6px; }
.ic8 { width: 8px; height: 8px; }
.ic9 { width: 9px; height: 9px; }
.ic10 { width: 10px; height: 10px; }
.ic11 { width: 11px; height: 11px; }
.ic12 { width: 12px; height: 12px; }
.ic16 { width: 16px; height: 16px; }
.vsep { flex: none; width: 1px; height: 9px; background: #c7cbd1; }
.caret { width: 0; height: 0; border: 2px solid transparent; border-top: 3px solid currentColor; border-bottom: 0; }

/* browser chrome */
.browser { flex: none; background: #40384b; color: #d5cfdc; }
.tabstrip { display: flex; height: 23px; background: #2d2733; align-items: flex-start; }
.tabsearch { width: 16px; height: 16px; margin: 3px 5px 0 3px; border-radius: 5px; background: #403c45; }
.tab { display: flex; align-items: center; width: 130px; height: 19px; margin-top: 4px; padding: 0 6px 0 3px; gap: 4px; border-radius: 5px 5px 0 0; background: #40384b; font-size: 7px; }
.tab-title { flex: 1; overflow: hidden; white-space: nowrap; mask-image: linear-gradient(90deg, #000 80%, transparent); }
.newtab { width: 20px; height: 23px; }
.wincontrols { display: flex; margin-left: auto; color: #8e8896; }
.wincontrols button { width: 26px; height: 22px; }
.addressrow { display: flex; align-items: center; height: 25px; padding: 0 0 0 2px; }
.addressrow > button { width: 20px; height: 20px; }
.addressrow > .ext { width: 29px; }
.addressrow .dim { color: #7d7588; }
.addressrow .vsep, .bookmarks .vsep { background: #6a6275; }
.omnibox { display: flex; align-items: center; flex: 1; height: 19px; margin: 0 0 0 6px; padding: 0 3px 0 2px; border-radius: 10px; background: #2a2532; }
.omnibox input { flex: 1; height: 15px; padding-left: 4px; color: #d3cddb; }
.omnibox button { width: 19px; }
.omnibox .siteinfo { width: 15px; height: 15px; border-radius: 8px; background: #40384b; }
.bookmarks { display: flex; align-items: center; height: 20px; padding: 0 8px 4px 10px; gap: 8px; font-size: 7px; }
.bookmarks a { display: flex; align-items: center; gap: 4px; }
.allbm { display: flex; align-items: center; gap: 9px; margin-left: auto; }

/* document header */
.docs { display: flex; flex-direction: column; flex: 1; min-height: 0; border-top: 1px solid #dcdfe6; }
.dochead { display: flex; height: 32px; flex: none; }
.logo { width: 13px; height: 18px; margin: 7px 7px 0 11px; }
.docinfo { padding-top: 4px; }
.titleline { display: flex; align-items: center; height: 13px; gap: 7px; }
h1 { font-size: 9px; font-weight: 400; line-height: 13px; color: #1f1f1f; margin-right: 4px; }
.menu { display: flex; gap: 9px; margin: 0 1px; font-size: 7px; line-height: 11px; }
.docactions { display: flex; align-items: center; margin-left: auto; padding: 0 11px 2px 0; }
.docactions > button { width: 26px; height: 16px; }
.docactions .meet { width: 38px; gap: 4px; margin-right: 4px; }
.share { display: flex; height: 20px; margin-right: 8px; border-radius: 10px; overflow: hidden; background: #c2e7ff; color: #0b2a44; font-weight: 500; }
.share-main { padding: 0 4px 0 7px; gap: 3px; }
.share-more { width: 17px; border-left: 1px solid #fff; }

/* toolbar */
.toolbar { display: flex; align-items: center; flex: none; height: 21px; margin: 0 8px; padding-left: 5px; border-radius: 11px; background: #edf2fa; overflow: hidden; }
.toolbar > button { width: 17px; height: 19px; }
.toolbar .wide { width: 20px; }
.toolbar .vsep { margin-right: 1px; }
.small { font-size: 6px; font-weight: 500; }
.toolbar .num { font-size: 5px; }
.small sub { font-size: 5px; line-height: 5px; }
.drop { position: relative; display: flex; align-items: center; }
.drop::after, .chip::after { content: ""; position: absolute; right: 5px; border: 2px solid transparent; border-top: 3px solid currentColor; border-bottom: 0; }
.drop select, .drop input { width: 100%; }
.zoomsel { width: 39px; padding-left: 3px; }
.fontsel { width: 52px; padding-left: 7px; }
.sizer { display: flex; align-items: center; width: 49px; }
.sizer button { width: 15px; }
.sizer input { width: 18px; height: 13px; border: 1px solid #747775; border-radius: 3px; text-align: center; }
.fontcolor { position: relative; }
.fontcolor::after { content: ""; position: absolute; left: 3px; right: 3px; bottom: 4px; height: 1px; background: #000; }

/* formula bar */
.formula { display: flex; align-items: center; flex: none; height: 18px; background: #fff; font-size: 6px; }
.namebox { width: 54px; padding-left: 7px; }
.fx { width: 18px; padding-left: 7px; font: italic 8px "Liberation Serif", serif; color: #888; }
.fxinput { flex: 1; font-family: "Liberation Sans", sans-serif; }

/* grid */
.sheet { display: grid; grid-template: 1fr 6px / 1fr 6px; flex: 1; min-height: 0; background: #fff; isolation: isolate; }
.gridwrap { display: flex; flex-direction: column; min-height: 0; overflow: hidden; }
table { display: flex; flex-direction: column; min-height: 0; flex: 1; font: 7px/12px "Liberation Sans", sans-serif; color: #1c1c1c; }
thead { display: block; position: relative; z-index: 2; border-bottom: 2px solid #bdbdbd; background: #fff; }
tr { display: grid; grid-template-columns: 23px 51px 226px 51px 52px 1fr; min-height: 0; }
th { font-weight: 400; font-size: 6px; color: #5f6368; text-align: center; border-right: 1px solid #c4c7c5; overflow: hidden; }
.cols { height: 12px; line-height: 11px; border-top: 1px solid #c4c7c5; }
.cols .sel { background: #d3e3fd; color: #1a4a9c; font-weight: 700; }
.frozen { height: 11px; }
.frozen td { background: #38761d; color: #fff; line-height: 11px; }
.frozen .mid { text-align: center; }
.frozen .rest { background: #fff; }
tbody { display: grid; grid-template-rows: repeat(22, 1fr); height: 235px; margin-top: -7px; flex: none; }
td { padding: 0 2px; border-right: 1px solid #111; white-space: nowrap; min-height: 0; }
tbody td { border-bottom: 1px solid #333; }
tbody th { border-bottom: 1px solid #e3e3e3; line-height: 13px; }
tbody td:nth-child(2) { text-align: right; padding: 0 1px; }
tbody td:last-child { border-color: #e3e3e3; padding-left: 5px; }
.emo { display: inline-block; width: 8px; height: 8px; vertical-align: -1px; }
.active th { background: #d3e3fd; color: #123a7a; }
.active td:nth-child(3) { position: relative; outline: 1px dashed #1a66d6; border-bottom-color: #1a66d6; }
.active td:nth-child(3)::after { content: ""; position: absolute; right: -3px; bottom: -3px; width: 4px; height: 4px; border-radius: 2px; background: #1a66d6; z-index: 1; }
.chip { position: relative; display: flex; align-items: center; width: 42px; height: 8px; margin-top: 2px; padding: 0 3px; border-radius: 4px; background: #ffe5a0; color: #5b4a14; }
.chip::after { right: 4px; }
.chip.ok { background: #d4edbc; color: #12733a; }
.chip select { width: 100%; line-height: 8px; }
.vscroll { border-left: 1px solid #d9d9d9; position: relative; }
.vscroll i { position: absolute; left: 0; bottom: 28px; width: 4px; height: 12px; border-radius: 2px; background: #d0d3d8; }
.hscroll { grid-column: 1 / -1; padding: 1px 0 1px 23px; background: #f8fafd; }
.hscroll i { display: block; width: 342px; height: 4px; border-radius: 0 2px 2px 0; background: #dadce0; }

/* sheet tabs */
.sheettabs { display: flex; align-items: center; flex: none; height: 19px; padding: 0 4px 0 21px; background: #f9fbfd; font-weight: 500; }
.tool { width: 20px; height: 19px; }
.collapse { margin-left: auto; font-size: 12px; }
.st { height: 19px; gap: 5px; padding: 0 6px; }
.st.first { margin-left: 8px; }
.st.on { background: #e1e9f7; color: #0b57d0; font-weight: 700; }

/* taskbar */
.taskbar { display: flex; flex: none; height: 17px; background: linear-gradient(90deg, #3d3a36, #45443a 45%, #4d3b36 75%, #493a37); color: #eee; }
.taskbar button { width: 21px; border-bottom: 1px solid transparent; }
.taskbar .run { border-bottom-color: #e88f94; }
.taskbar .alert { background: #c86a24; }
.taskbar .open { background: #66645f; }
.tray { display: flex; align-items: center; gap: 5px; margin-left: auto; padding-right: 14px; }
.lang { margin-right: 2px; font-size: 7px; }
.tray time { margin-right: 4px; font-size: 7px; }

/* emulator windows */
.emu { position: absolute; top: 109px; display: grid; grid-template: 18px 1fr / 1fr 22px; width: 179px; height: 293px; border-left: 1px solid #3d7a70; border-bottom: 1px solid #3d7a70; background: #060a12; color: #e8e8e8; }
.emu.one { left: 402px; }
.emu.two { left: 581px; }
.emubar { grid-column: 1 / -1; display: flex; align-items: center; padding-left: 2px; }
.emubar strong { display: flex; align-items: center; gap: 1px; margin-left: 2px; font: bold 10px/12px "DejaVu Sans", sans-serif; color: #fff; }
.inst { flex: 1; margin-left: 2px; font-size: 7px; }
.emubar button { width: 18px; }
.emubar .fold { width: 22px; }
.side { display: flex; flex-direction: column; }
.side button { height: 21px; }
.side .navkey { margin-top: 15px; }
.screen { position: relative; display: flex; flex-direction: column; overflow: hidden; background: #fff; color: #2b2d33; font-family: Inter, sans-serif; font-size: 5px; line-height: 7px; }
.status { display: flex; align-items: center; height: 7px; padding: 0 4px; gap: 2px; color: #777; }
.sys { display: flex; margin-left: auto; gap: 2px; }
h2 { display: flex; align-items: center; height: 22px; padding-left: 7px; gap: 7px; font: 500 8px/10px Roboto, sans-serif; }
h2 svg, .sort, .appnav .on { color: #1f7bf5; }
.own { display: flex; align-items: center; justify-content: space-between; height: 20px; padding: 0 8px 0 6px; font-size: 6px; }
.own svg { color: #888; }
.card { display: flex; flex-direction: column; flex: none; margin: 0 7px 5px 6px; padding: 4px 6px 5px 5px; height: 50px; border-radius: 4px; background: #f5f5f6; }
.card.mine { height: 32px; }
.stars { display: flex; justify-content: flex-end; gap: 1px; height: 5px; color: #ff9a1f; }
.stars svg { width: 5px; height: 5px; }
.stars .off { color: #dfe1e5; }
.who { display: flex; justify-content: space-between; height: 8px; line-height: 8px; color: #2b2d33; }
.who b { font-weight: 500; font-size: 6px; }
.who time { color: #8a8d94; }
.pub { color: #35b34a; }
.card p { display: flex; margin-top: 2px; }
.votes { display: flex; gap: 5px; margin-top: 4px; }
.votes button { width: 20px; height: 12px; border-radius: 6px; background: #e3e4e7; }
.flip { transform: rotate(180deg); }
.rating { display: flex; flex: none; margin: 0 7px 0 6px; padding: 8px 0 5px 2px; height: 50px; border-top: 1px solid #f1f1f2; color: #8a8d94; }
.rating ol { display: grid; grid-auto-rows: 1fr; width: 69px; height: 35px; list-style: none; }
.rating li { display: flex; align-items: center; gap: 3px; }
.bar { flex: 1; height: 2px; border-radius: 1px; background: #eef0f3; border-right: 1px solid #1f7bf5; }
.bar i { display: block; height: 2px; border-radius: 1px; background: #0a7cff; }
.score { flex: 1; display: flex; flex-direction: column; align-items: center; margin-right: 20px; }
.score b { font: 500 13px/14px Roboto, sans-serif; color: #2b2d33; }
.score .stars { margin: 3px 0; }
.score small { font-size: 5px; line-height: 7px; white-space: nowrap; }
.sort { justify-content: flex-start; height: 12px; margin-bottom: 3px; padding-left: 6px; gap: 2px; font-size: 6px; }
.toast { position: absolute; left: 2px; right: 4px; bottom: 25px; display: flex; gap: 3px; height: 21px; padding: 3px 4px; border-radius: 4px; background: #2e3137; color: #f0f0f0; line-height: 8px; }
.toast svg { width: 8px; color: #35a845; }
.appnav { position: absolute; left: 0; right: 0; bottom: 0; display: grid; grid-template-columns: repeat(5, 1fr); height: 22px; padding-top: 4px; background: #f5f6f7; color: #7d8187; font-size: 3px; line-height: 5px; }
.appnav a { display: flex; flex-direction: column; align-items: center; gap: 1px; }
```
